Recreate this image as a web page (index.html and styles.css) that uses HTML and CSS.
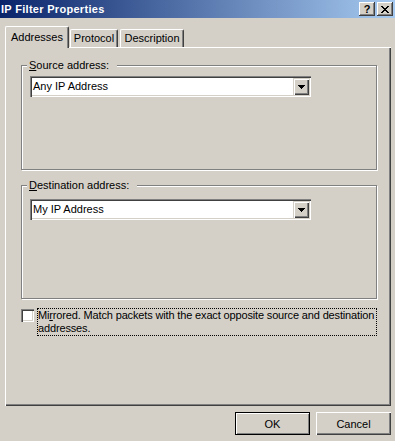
FILE: index.html
```html
<!DOCTYPE html>
<html>
<head>
<meta charset="utf-8">
<title>IP Filter Properties</title>
<link rel="stylesheet" href="styles.css">
</head>
<body>
<div class="window">
  <div class="titlebar">
    <span class="title">IP Filter Properties</span>
    <div class="tb-buttons">
      <span class="tb-btn tb-help">?</span>
      <span class="tb-btn">
        <svg width="8" height="7" viewBox="0 0 8 7" shape-rendering="crispEdges"><path d="M0 0h2v1H0zM6 0h2v1H6zM1 1h2v1H1zM5 1h2v1H5zM2 2h4v1H2zM3 3h2v1H3zM2 4h4v1H2zM1 5h2v1H1zM5 5h2v1H5zM0 6h2v1H0zM6 6h2v1H6z" fill="#000"/></svg>
      </span>
    </div>
  </div>
  <div class="client">
    <div class="tabs">
      <div class="tab tab-addresses active">Addresses</div>
      <div class="tab tab-protocol">Protocol</div>
      <div class="tab tab-description">Description</div>
    </div>
    <div class="panel">
      <fieldset class="group">
        <legend><u>S</u>ource address:</legend>
        <div class="group-body gb-source">
          <div class="combo">
            <span class="combo-text">Any IP Address</span>
            <span class="combo-btn"><svg width="7" height="4" viewBox="0 0 7 4" shape-rendering="crispEdges"><path d="M0 0h7v1H0zM1 1h5v1H1zM2 2h3v1H2zM3 3h1v1H3z" fill="#000"/></svg></span>
          </div>
        </div>
      </fieldset>
      <fieldset class="group group-dest">
        <legend><u>D</u>estination address:</legend>
        <div class="group-body gb-dest">
          <div class="combo">
            <span class="combo-text">My IP Address</span>
            <span class="combo-btn"><svg width="7" height="4" viewBox="0 0 7 4" shape-rendering="crispEdges"><path d="M0 0h7v1H0zM1 1h5v1H1zM2 2h3v1H2zM3 3h1v1H3z" fill="#000"/></svg></span>
          </div>
        </div>
      </fieldset>
      <div class="check-row">
        <span class="checkbox"></span>
        <span class="check-label">Mi<u>r</u>rored. Match packets with the exact opposite source and destination<br>addresses.</span>
      </div>
    </div>
    <div class="footer">
      <span class="btn btn-default">OK</span>
      <span class="btn">Cancel</span>
    </div>
  </div>
</div>
</body>
</html>
```
FILE: styles.css
```css
html, body {
  margin: 0;
  padding: 0;
  background: #D4D0C8;
}
.window {
  width: 395px;
  height: 441px;
  background: #D4D0C8;
  font-family: "Liberation Sans", Arial, sans-serif;
  font-size: 11px;
  color: #000;
  overflow: hidden;
}
.titlebar {
  height: 18px;
  display: flex;
  align-items: center;
  padding: 0 2px 0 1px;
  background: linear-gradient(to right, #0A246A 0%, #A6CAF0 100%);
  color: #fff;
}
.title {
  font-weight: bold;
  font-size: 11px;
  letter-spacing: 0.3px;
  line-height: 13px;
}
.tb-buttons {
  margin-left: auto;
  display: flex;
  gap: 2px;
}
.tb-btn {
  width: 16px;
  height: 14px;
  box-sizing: border-box;
  display: flex;
  align-items: center;
  justify-content: center;
  background: #D4D0C8;
  box-shadow: inset -1px -1px #404040, inset 1px 1px #fff, inset -2px -2px #808080;
  color: #000;
}
.tb-help {
  font-weight: bold;
  font-size: 11px;
  line-height: 14px;
}
.client {
  padding: 8px 4px 0 5px;
}
.tabs {
  display: flex;
  align-items: flex-end;
  height: 21px;
  position: relative;
  z-index: 1;
}
.tab {
  box-sizing: border-box;
  height: 18px;
  display: flex;
  align-items: center;
  justify-content: center;
  background: #D4D0C8;
  border-top: 1px solid #fff;
  border-left: 1px solid #fff;
  border-right: 1px solid #404040;
  border-radius: 2px 2px 0 0;
  box-shadow: inset -1px 0 #808080;
  padding-bottom: 1px;
}
.tab.active {
  height: 22px;
  margin-bottom: -1px;
  padding-bottom: 2px;
}
.tab-addresses { width: 64px; }
.tab-protocol { width: 48px; margin-left: 1px; }
.tab-description { width: 64px; margin-left: 2px; }
.panel {
  box-sizing: border-box;
  width: 386px;
  height: 359px;
  padding: 12px 14px 0 16px;
  box-shadow: inset 1px 1px #fff, inset -1px -1px #404040, inset -2px -2px #808080;
}
.group {
  margin: 0;
  padding: 0;
  min-inline-size: 0;
  border: 1px solid #808080;
  box-shadow: 1px 1px 0 #fff, inset 1px 1px 0 #fff;
}
.group legend {
  margin-left: 5px;
  padding: 0 8px 0 2px;
  line-height: 13px;
  background: #D4D0C8;
}
.group-dest {
  margin-top: 9px;
}
.group-body {
  box-sizing: border-box;
  padding-left: 8px;
}
.gb-source {
  height: 97px;
  padding-top: 4px;
}
.gb-dest {
  height: 106px;
  padding-top: 7px;
}
.combo {
  box-sizing: border-box;
  width: 281px;
  height: 21px;
  padding: 2px;
  display: flex;
  align-items: stretch;
  background: #fff;
  box-shadow: inset 1px 1px #808080, inset 2px 2px #404040, inset -1px -1px #fff, inset -2px -2px #D4D0C8;
}
.combo-text {
  flex: 1;
  padding-left: 1px;
  line-height: 17px;
}
.combo-btn {
  width: 16px;
  height: 17px;
  box-sizing: border-box;
  display: flex;
  align-items: center;
  justify-content: center;
  background: #D4D0C8;
  box-shadow: inset 1px 1px #D4D0C8, inset 2px 2px #fff, inset -1px -1px #404040, inset -2px -2px #808080;
}
.check-row {
  display: flex;
  align-items: flex-start;
  margin-top: 9px;
}
.checkbox {
  width: 13px;
  height: 13px;
  margin-top: 1px;
  box-sizing: border-box;
  background: #fff;
  box-shadow: inset 1px 1px #808080, inset 2px 2px #404040, inset -1px -1px #fff, inset -2px -2px #D4D0C8;
  flex: none;
}
.check-label {
  margin-left: 3px;
  width: 340px;
  box-sizing: border-box;
  border: 1px dotted #000;
  line-height: 13px;
  letter-spacing: -0.15px;
  white-space: nowrap;
  overflow: hidden;
}
.footer {
  display: flex;
  justify-content: flex-end;
  gap: 6px;
  margin-top: 6px;
}
.btn {
  box-sizing: border-box;
  width: 75px;
  height: 23px;
  display: flex;
  align-items: center;
  justify-content: center;
  background: #D4D0C8;
  box-shadow: inset 1px 1px #fff, inset -1px -1px #404040, inset -2px -2px #808080;
}
.btn-default {
  border: 1px solid #000;
  box-shadow: inset 1px 1px #fff, inset -1px -1px #808080;
}
```
